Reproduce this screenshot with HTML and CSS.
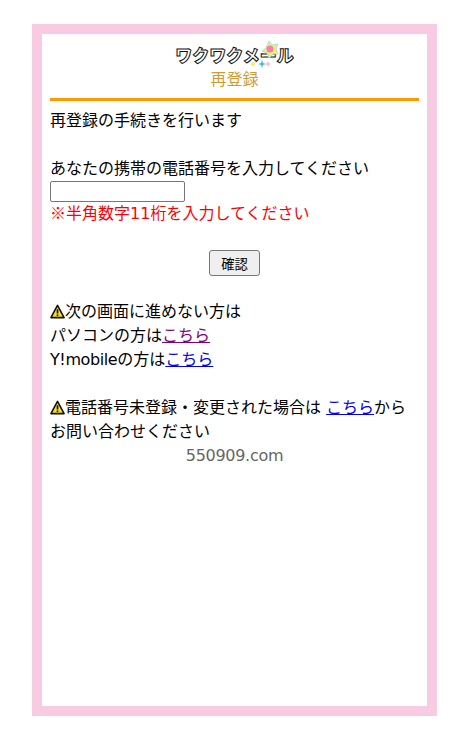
FILE: index.html
```html
<!DOCTYPE html>
<html lang="ja">
<head>
    <meta charset="UTF-8">
    <meta name="viewport" content="width=device-width, initial-scale=1.0">
    <title>再登録</title>
    <link rel="stylesheet" href="styles.css">
</head>
<body>
    <div class="frame">
        <div class="header">
            <div class="logo">
                <span class="logo-text">ワクワクメール</span>
                <svg class="logo-star" viewBox="0 0 30 30" width="30" height="30">
                    <polygon points="19,0 22,4 28,3 26,8 28,13 23,13 19,17 17,12 12,10 16,7" fill="#f7ef5a" stroke="#a9dcef" stroke-width="1"/>
                    <circle cx="20" cy="8" r="3.5" fill="#ee82b8"/>
                    <path d="M3 20 L4 22 L6 23 L4 24 L3 26 L2 24 L0 23 L2 22 Z" fill="#f7ef5a"/>
                    <path d="M12 19 L13 22 L16 23 L13 24 L12 27 L11 24 L8 23 L11 22 Z" fill="#45b6ee"/>
                    <path d="M18 20 L19 22 L21 23 L19 24 L18 26 L17 24 L15 23 L17 22 Z" fill="#f6bcd8"/>
                </svg>
            </div>
            <div class="subtitle">再登録</div>
        </div>
        <div class="content">
            <p>再登録の手続きを行います</p>
            <br>
            <p>あなたの携帯の電話番号を入力してください</p>
            <input type="text" class="tel-input">
            <p class="note"><span class="mark">※</span>半角数字11桁を入力してください</p>
            <div class="button-row">
                <button class="confirm-button">確認</button>
            </div>
            <p><svg class="warn" viewBox="0 0 16 16" width="15" height="15"><path d="M8 1.5 L15 14.5 H1 Z" fill="#ffdc2e" stroke="#111" stroke-width="1.7" stroke-linejoin="round"/><path d="M8 5.5 V10 M8 11.3 V12.8" stroke="#111" stroke-width="1.8"/></svg>次の画面に進めない方は</p>
            <p>パソコンの方は<a href="#" class="visited">こちら</a></p>
            <p><span class="latin">Y!mobile</span>の方は<a href="#">こちら</a></p>
            <br>
            <p><svg class="warn" viewBox="0 0 16 16" width="15" height="15"><path d="M8 1.5 L15 14.5 H1 Z" fill="#ffdc2e" stroke="#111" stroke-width="1.7" stroke-linejoin="round"/><path d="M8 5.5 V10 M8 11.3 V12.8" stroke="#111" stroke-width="1.8"/></svg>電話番号未登録・変更された場合は <a href="#">こちら</a>から<br>お問い合わせください</p>
            <p class="domain">550909.com</p>
        </div>
    </div>
</body>
</html>
```

FILE: styles.css
```css
body {
    margin: 0;
    background-color: #fff;
    font-family: "DejaVu Sans", "Noto Sans CJK JP", sans-serif;
    font-size: 16px;
    line-height: 24px;
    color: #000;
}

.frame {
    box-sizing: border-box;
    width: 405px;
    height: 692px;
    margin: 24px 0 0 32px;
    padding: 8px;
    border: 10px solid #f8cbe2;
}

.header {
    text-align: center;
    border-bottom: 3px solid #ff9900;
    height: 56px;
}

.logo {
    position: relative;
    width: 120px;
    height: 24px;
    margin: 0 auto;
}

.logo-text {
    display: block;
    padding-top: 2px;
    font-family: "Noto Sans CJK JP", sans-serif;
    font-size: 17px;
    font-weight: 900;
    line-height: 22px;
    white-space: nowrap;
    color: #fff;
    -webkit-text-stroke: 1px #111;
}

.logo-star {
    position: absolute;
    left: 75px;
    top: -1px;
}

.subtitle {
    color: #d39a32;
    line-height: 24px;
    font-family: "Noto Sans CJK JP", sans-serif;
}

.content {
    padding-top: 8px;
}

p {
    margin: 0;
}

.tel-input {
    display: block;
    box-sizing: border-box;
    width: 135px;
    height: 21px;
    margin: 0;
    padding: 1px 2px;
    border: 1px solid #767676;
    border-radius: 2px;
}

.note {
    color: #ff0000;
}

.mark {
    font-family: "Noto Sans CJK JP", sans-serif;
    line-height: 0;
}

.latin {
    letter-spacing: -0.4px;
}

.button-row {
    display: flex;
    justify-content: center;
    padding: 24px 0;
}

.confirm-button {
    box-sizing: border-box;
    width: 51px;
    height: 26px;
    padding: 0;
    background-color: #efefef;
    border: 1px solid #767676;
    border-radius: 3px;
    font-family: inherit;
    font-size: 13.33px;
    color: #000;
}

.warn {
    vertical-align: -2px;
}

a {
    color: #0000ee;
}

a.visited {
    color: #800080;
}

.domain {
    text-align: center;
    color: #666;
    letter-spacing: -0.3px;
}
```
